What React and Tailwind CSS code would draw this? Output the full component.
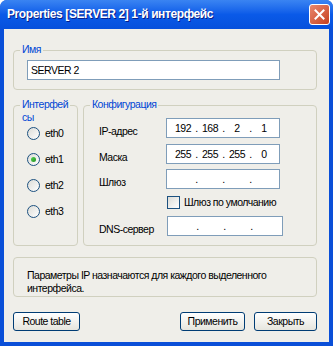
import React from 'react'

const bodyBg = 'bg-[#EFEEE9]'

function GroupBox({ title, className = '', children }) {
  return (
    <div className={`relative rounded-[4px] border border-[#D0D0BF] ${className}`}>
      <span className="absolute left-[6px] top-[-8px] bg-[#EFEEE9] px-[2px] leading-[13px] text-[#0046D5]">
        {title}
      </span>
      {children}
    </div>
  )
}

function Radio({ label, checked }) {
  return (
    <div className="flex h-[26px] items-center gap-[5px]">
      <span className="flex h-[13px] w-[13px] items-center justify-center rounded-full border border-[#1C5180] bg-gradient-to-br from-[#DCDCD7] to-white">
        {checked && (
          <span className="h-[5px] w-[5px] rounded-full bg-gradient-to-br from-[#55D451] to-[#219121]" />
        )}
      </span>
      <span>{label}</span>
    </div>
  )
}

function IpField({ parts, className = 'w-[114px]' }) {
  return (
    <div className={`grid h-[20px] grid-cols-[22px_5px_22px_5px_22px_5px_22px] items-center border border-[#7F9DB9] bg-white px-[5px] ${className}`}>
      {parts.map((p, i) => (
        <React.Fragment key={i}>
          <span className="text-center">{p}</span>
          {i < 3 && <span className="text-center">.</span>}
        </React.Fragment>
      ))}
    </div>
  )
}

function XpButton({ children, className = '' }) {
  return (
    <button className={`h-[19px] rounded-[3px] border border-[#003C74] bg-gradient-to-b from-white to-[#E6E5DE] leading-[17px] text-black ${className}`}>
      {children}
    </button>
  )
}

function ConfigRow({ label, children, mt }) {
  return (
    <div className={`flex items-center ${mt}`}>
      <span className="mt-[6px] w-[67px] shrink-0">{label}</span>
      {children}
    </div>
  )
}

export default function App() {
  return (
    <div className="h-[346px] w-[333px] bg-white font-['Liberation_Sans',Arial,sans-serif] text-[10.5px] leading-[13px] tracking-[-0.5px] text-black">
      <div className="flex h-full w-full flex-col rounded-t-[7px] bg-[#0A4FD8]">
        <div className="flex h-[29px] items-center justify-between rounded-t-[7px] bg-gradient-to-b from-[#3A84F2] via-[#0A5AE8] to-[#0650DC] pl-[7px] pr-[3px]">
          <span className="text-[12px] font-bold tracking-[-0.4px] text-white [text-shadow:1px_1px_0_#0A1E88]">
            Properties [SERVER 2] 1-й интерфейс
          </span>
          <span className="flex h-[21px] w-[21px] items-center justify-center rounded-[3px] border border-white bg-gradient-to-br from-[#E9876C] to-[#C63F1C]">
            <svg width="11" height="11" viewBox="0 0 11 11">
              <path d="M1.5 1.5L9.5 9.5M9.5 1.5L1.5 9.5" stroke="white" strokeWidth="2" strokeLinecap="square" />
            </svg>
          </span>
        </div>

        <div className={`mx-[4px] mb-[4px] flex flex-1 flex-col pl-[9px] pr-[12px] pt-[21px] ${bodyBg}`}>
          <GroupBox title="Имя" className="h-[40px] pl-[13px] pt-[9px]">
            <div className="flex h-[20px] w-[253px] items-center border border-[#7F9DB9] bg-white px-[3px]">
              SERVER 2
            </div>
          </GroupBox>

          <div className="mt-[15px] flex h-[141px] gap-[5px]">
            <GroupBox title={<>Интерфей<br />сы</>} className="w-[65px] pl-[13px] pt-[14px]">
              <Radio label="eth0" />
              <Radio label="eth1" checked />
              <Radio label="eth2" />
              <Radio label="eth3" />
            </GroupBox>

            <GroupBox title="Конфигурация" className="w-[234px] pl-[15px] pt-[12px]">
              <ConfigRow label="IP-адрес">
                <IpField parts={['192', '168', '2', '1']} />
              </ConfigRow>
              <ConfigRow label="Маска" mt="mt-[6px]">
                <IpField parts={['255', '255', '255', '0']} />
              </ConfigRow>
              <ConfigRow label="Шлюз" mt="mt-[5px]">
                <IpField parts={['', '', '', '']} />
              </ConfigRow>
              <div className="ml-[68px] mt-[7px] flex h-[13px] items-center gap-[4px]">
                <span className="h-[13px] w-[13px] border border-[#1C5180] bg-gradient-to-br from-[#DCDCD7] to-white" />
                <span>Шлюз по умолчанию</span>
              </div>
              <ConfigRow label="DNS-сервер" mt="mt-[7px]">
                <IpField parts={['', '', '', '']} className="ml-[1px] w-[116px]" />
              </ConfigRow>
            </GroupBox>
          </div>

          <div className="mt-[11px] h-[40px] rounded-[4px] border border-[#D0D0BF] pl-[13px] pt-[11px]">
            Параметры IP назначаются для каждого выделенного
            <br />
            интерфейса.
          </div>

          <div className="mt-[15px] flex items-center">
            <XpButton className="w-[67px]">Route table</XpButton>
            <XpButton className="ml-auto w-[65px]">Применить</XpButton>
            <XpButton className="ml-[9px] w-[63px]">Закрыть</XpButton>
          </div>
        </div>
      </div>
    </div>
  )
}
